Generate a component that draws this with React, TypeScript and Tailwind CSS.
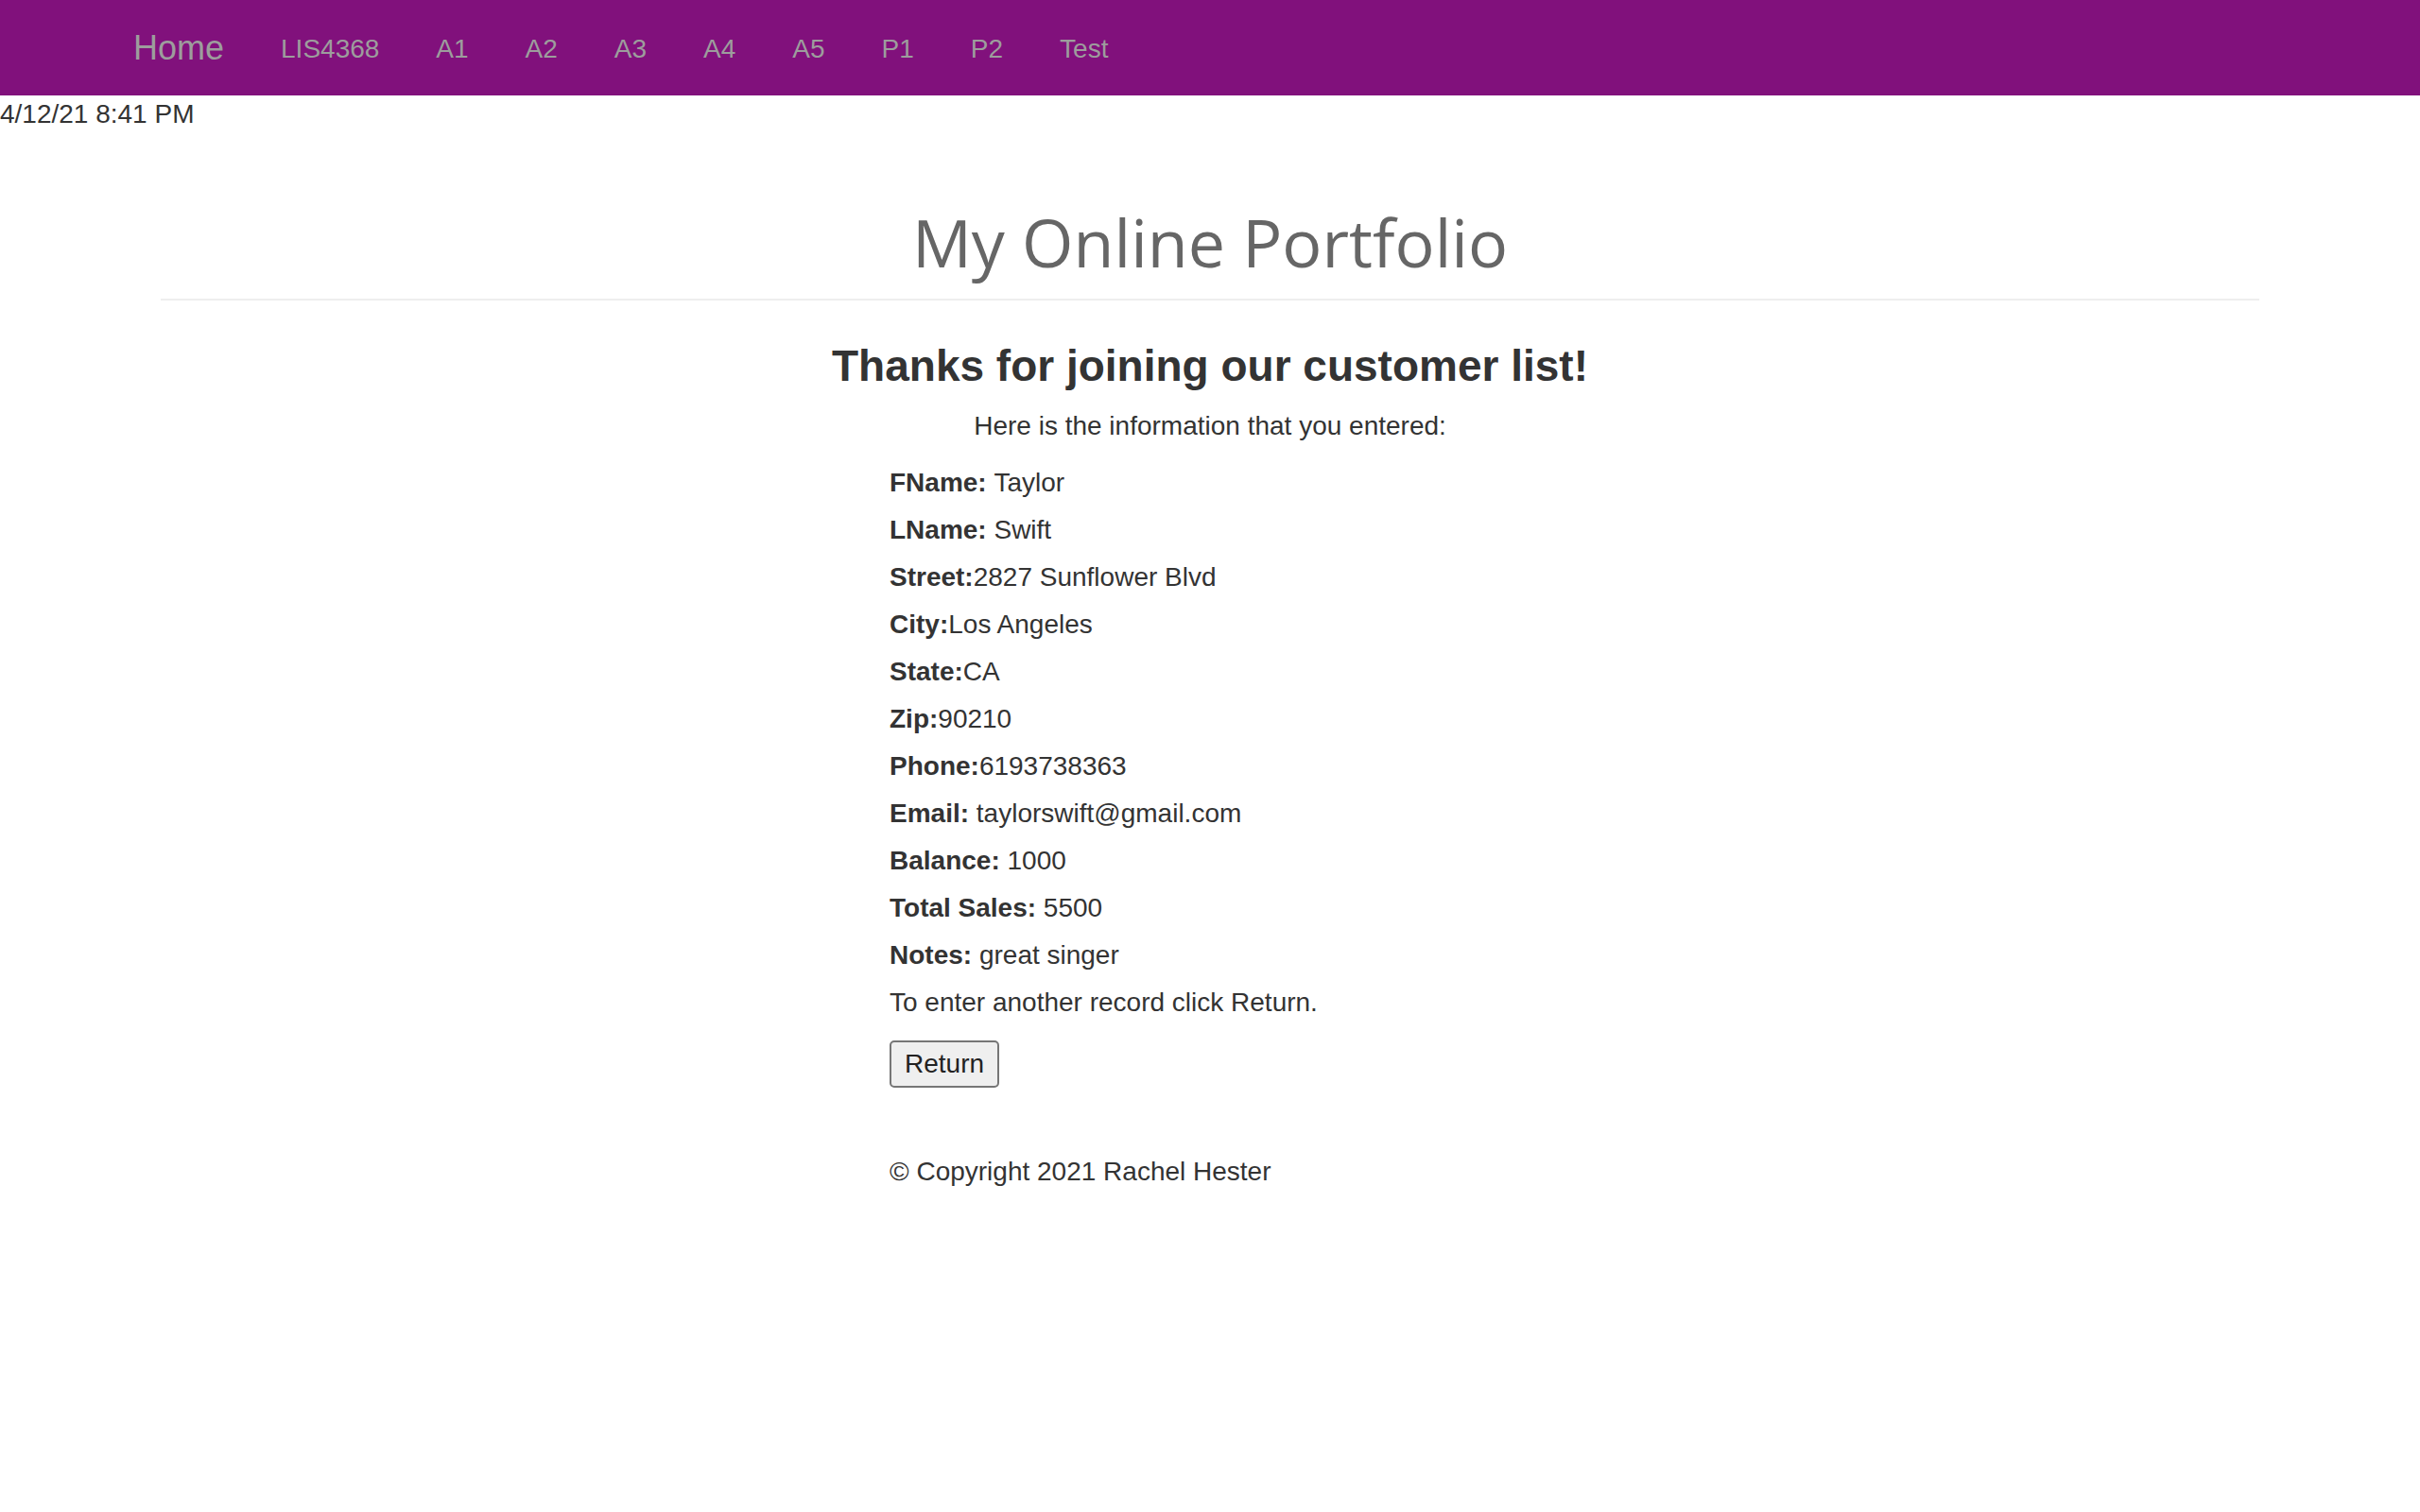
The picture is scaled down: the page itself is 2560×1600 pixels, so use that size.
const navLinks = ['LIS4368', 'A1', 'A2', 'A3', 'A4', 'A5', 'P1', 'P2', 'Test'];

// label text keeps the original spacing (some have a space after the colon, some don't)
const fields: [string, string][] = [
	['FName: ', 'Taylor'],
	['LName: ', 'Swift'],
	['Street:', '2827 Sunflower Blvd'],
	['City:', 'Los Angeles'],
	['State:', 'CA'],
	['Zip:', '90210'],
	['Phone:', '6193738363'],
	['Email: ', 'taylorswift@gmail.com'],
	['Balance: ', '1000'],
	['Total Sales: ', '5500'],
	['Notes: ', 'great singer'],
];

const NavBar = () => (
	<nav className="flex h-[101px] items-center bg-[#81117c] pl-[111px]">
		<a className="px-[30px] text-[36px] leading-[36px] text-[#9d9d9d]">Home</a>
		{navLinks.map((link) => (
			<a key={link} className="px-[30px] pt-[3px] text-[28px] leading-[28px] text-[#9d9d9d]">
				{link}
			</a>
		))}
	</nav>
);

export default function App() {
	return (
		<div className="min-h-screen bg-white font-['Liberation_Sans',Arial,sans-serif] text-[#333]">
			<NavBar />
			<div className="text-[28px] leading-[40px]">4/12/21 8:41 PM</div>

			<div className="mx-auto w-[2220px]">
				<div className="mt-[77px] border-b-2 border-[#eeeeee] pb-[21px] text-center">
					<h1 className="font-['Open_Sans',sans-serif] text-[70px] leading-[77px] text-[#666]">
						My Online Portfolio
					</h1>
				</div>

				<h2 className="mt-[44px] text-center text-[46px] font-bold leading-[50.6px]">
					Thanks for joining our customer list!
				</h2>
				<p className="mt-[18px] text-center text-[28px] leading-[40px]">
					Here is the information that you entered:
				</p>

				<div className="mx-auto mt-[15px] w-[678px]">
					{fields.map(([label, value]) => (
						<p key={label} className="text-[28px] leading-[50px]">
							<b className="whitespace-pre">{label}</b>
							{value}
						</p>
					))}
					<p className="text-[28px] leading-[50px]">To enter another record click Return.</p>
					<button className="mt-[15px] h-[50px] rounded-[5px] border-2 border-[#767676] bg-[#efefef] px-[14px] text-[28px] text-[#222]">
						Return
					</button>
					<footer className="mt-[69px] text-[28px] leading-[40px]">© Copyright 2021 Rachel Hester</footer>
				</div>
			</div>
		</div>
	);
}
